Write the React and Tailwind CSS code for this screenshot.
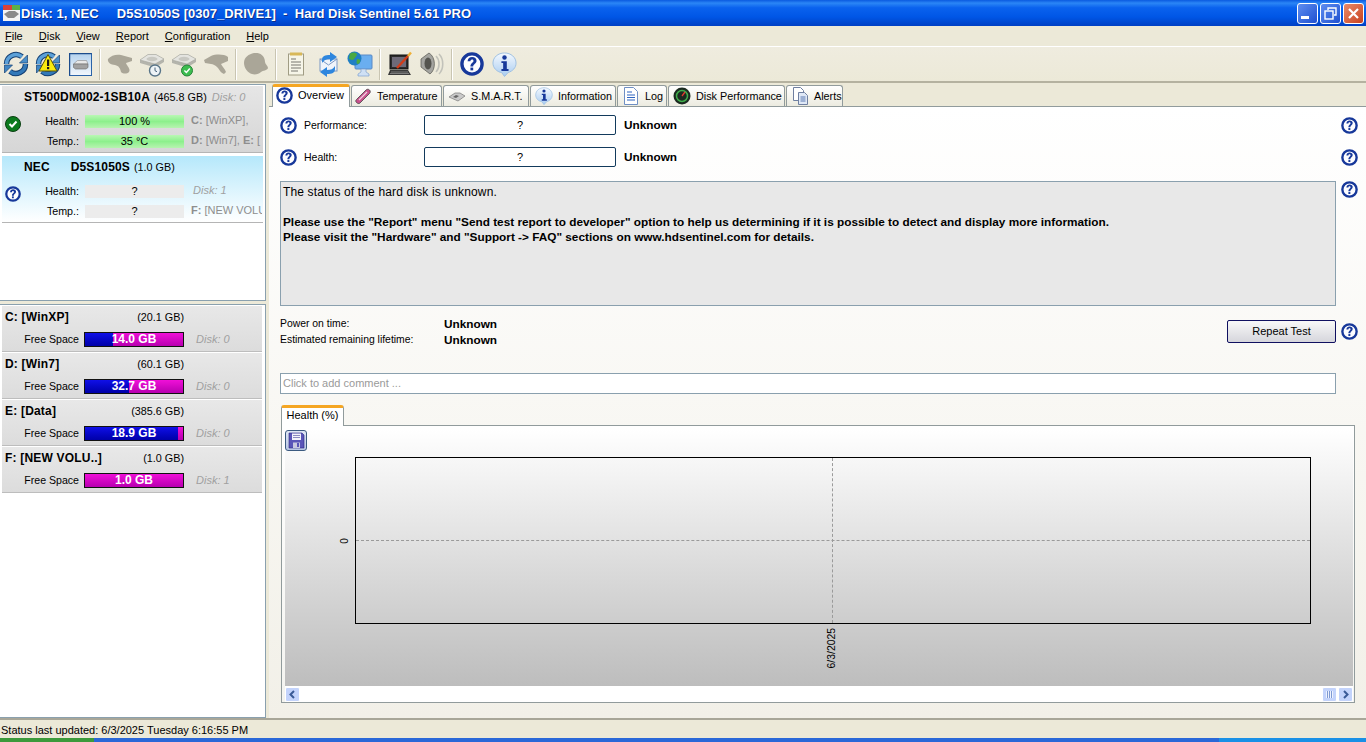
import React from "react";

const FONT = "font-['Liberation_Sans',Arial,sans-serif]";

function Help({ size = 16, className = "" }) {
  return (
    <svg width={size} height={size} viewBox="0 0 20 20" className={`shrink-0 ${className}`}>
      <circle cx="10" cy="10" r="8.4" fill="#fdfdff" stroke="#17389a" strokeWidth="2.8" />
      <path d="M6.3 7.700c.1-2.300 1.800-3.500 3.800-3.500 2.200 0 3.700 1.300 3.700 3 0 2.600-2.800 2.600-2.800 4.900H8.700c0-3.200 2.500-3.100 2.500-4.700 0-.8-.5-1.200-1.200-1.200-.8 0-1.200.6-1.300 1.500z" fill="#17389a" />
      <rect x="8.700" y="13" width="2.300" height="2.300" fill="#17389a" />
    </svg>
  );
}

function Info({ size = 25 }) {
  return (
    <svg width={size} height={size} viewBox="0 0 26 26" className="shrink-0">
      <defs>
        <linearGradient id="infoBg" x1="0" y1="0" x2="0" y2="1">
          <stop offset="0" stopColor="#f4f9ff" />
          <stop offset="1" stopColor="#a9ccf0" />
        </linearGradient>
      </defs>
      <path d="M13 1c6.800 0 12 4.600 12 10.500 0 4.800-3.400 8.400-8.200 9.800L13 25.500l-2.800-4C4.800 20.500 1 16.500 1 11.500 1 5.600 6.200 1 13 1z" fill="url(#infoBg)" stroke="#9dbfe2" />
      <circle cx="13" cy="5.800" r="2.300" fill="#17389a" />
      <path d="M9.800 9.600h5.600v8.200h1.800v1.900H9.800v-1.900h1.800v-6.300H9.800z" fill="#17389a" />
    </svg>
  );
}

function Ring() {
  return (
    <>
      <path d="M3.500 13a9.500 9.500 0 0 1 15.500-7.300" fill="none" stroke="#143f72" strokeWidth="5.500" />
      <path d="M22.500 13a9.500 9.500 0 0 1-15.500 7.300" fill="none" stroke="#143f72" strokeWidth="5.500" />
      <path d="M3.500 13a9.500 9.500 0 0 1 15.500-7.300" fill="none" stroke="#5ba0d8" strokeWidth="3.500" />
      <path d="M22.500 13a9.500 9.500 0 0 1-15.500 7.300" fill="none" stroke="#3379b8" strokeWidth="3.500" />
      <path d="M24.500 4v8h-8z" fill="#4a8fca" stroke="#143f72" strokeWidth=".7" />
      <path d="M1.500 22v-8h8z" fill="#3f86c4" stroke="#143f72" strokeWidth=".7" />
    </>
  );
}

function Refresh() {
  return (
    <svg width="26" height="26" viewBox="0 0 26 26">
      <Ring />
    </svg>
  );
}

function Alarm() {
  return (
    <svg width="26" height="26" viewBox="0 0 26 26">
      <Ring />
      <path d="M13 3.500l9 16.500H4z" fill="#f8ea10" stroke="#5c5606" strokeWidth="1" strokeLinejoin="round" />
      <rect x="12" y="8.500" width="2.200" height="6.500" fill="#1a1a1a" />
      <rect x="12" y="16" width="2.200" height="2.200" fill="#1a1a1a" />
    </svg>
  );
}

function DiskBox() {
  return (
    <svg width="23" height="23" viewBox="0 0 23 23">
      <defs>
        <linearGradient id="diskBg" x1="0" y1="0" x2="0" y2="1">
          <stop offset="0" stopColor="#b4d2ee" />
          <stop offset="1" stopColor="#f2f7fc" />
        </linearGradient>
      </defs>
      <rect x=".5" y=".5" width="22" height="22" fill="url(#diskBg)" stroke="#2a63a8" />
      <path d="M.5 22.500v-22h22" fill="none" stroke="#1c4c8c" strokeWidth="1.500" />
      <path d="M4.500 11l4-3.500h9l1.500 3.500z" fill="#e8e8e8" stroke="#8a8a8a" strokeWidth=".6" />
      <path d="M4.500 11H19v3.500l-2 1.500H6.500l-2-1.500z" fill="#a2a2a2" stroke="#6a6a6a" strokeWidth=".6" />
    </svg>
  );
}

// greyed toolbar buttons, the disabled ones are flat silhouettes
function Blob({ d }) {
  return (
    <svg width="26" height="22" viewBox="0 0 26 22">
      <path d={d} fill="#aaa698" />
    </svg>
  );
}

function GreyDisk({ badge }) {
  return (
    <svg width="26" height="26" viewBox="0 0 26 26">
      <path d="M1 9l8-5.500h8L25 8v3l-9 5.500L1 12z" fill="#b4b4ac" />
      <path d="M1 9l8-5.500h8L25 8l-9 5z" fill="#e4e4e0" stroke="#a6a69e" strokeWidth=".6" />
      <ellipse cx="13" cy="8" rx="5.500" ry="2.200" fill="#c8c8c2" />
      {badge === "clock" ? (
        <g>
          <circle cx="16" cy="19.500" r="5.500" fill="#eef3f6" stroke="#587488" strokeWidth="1.400" />
          <path d="M16 16.500v3.200l2 1" fill="none" stroke="#44607a" strokeWidth="1" />
        </g>
      ) : (
        <g>
          <circle cx="16" cy="19.500" r="5.500" fill="#3dbd50" stroke="#27833a" />
          <path d="M13.400 19.500l2 2 3.400-4" fill="none" stroke="#fff" strokeWidth="1.500" />
        </g>
      )}
    </svg>
  );
}

function Report() {
  return (
    <svg width="16" height="24" viewBox="0 0 16 24">
      <rect x=".5" y="2" width="15" height="21" fill="#f6f5e8" stroke="#a09c84" />
      <rect x="2" y=".5" width="12" height="3" fill="#d8b858" />
      <path d="M3 7h5M3 10h10M3 13h10M3 16h10M3 19h7" stroke="#77776f" strokeWidth="1.200" />
    </svg>
  );
}

function Mail() {
  return (
    <svg width="23" height="25" viewBox="0 0 23 25">
      <rect x="3" y="7" width="17" height="12" fill="#f0f4fb" stroke="#7b98c4" />
      <path d="M3 7l8.500 6L20 7" fill="none" stroke="#7b98c4" />
      <path d="M5 8C5 4 8 3 13 3V0l7 5-7 5V7C9 7 7 8 5 11z" fill="#2e86de" />
      <path d="M18 17c0 4-3 5-8 5v3l-7-5 7-5v3c4 0 6-1 8-4z" fill="#2e86de" />
    </svg>
  );
}

function Web() {
  return (
    <svg width="26" height="26" viewBox="0 0 26 26">
      <rect x="8" y="4" width="17" height="14" rx="1" fill="#6aaef0" stroke="#5a8ac6" />
      <path d="M14 18h5v3l3 2v2H11v-2l3-2z" fill="#cfe0f4" stroke="#7fa2cf" strokeWidth=".7" />
      <circle cx="7.500" cy="7.500" r="7" fill="#1f7fc4" />
      <path d="M3 2.500c2-1.500 5-1.500 6.500 0S8 6.500 7 8 3.500 9 2 7.500zM10 8c2-.5 4 .5 3 3s-3.500 2.500-3.500 0z" fill="#49a942" />
    </svg>
  );
}

function Laptop() {
  return (
    <svg width="24" height="26" viewBox="0 0 24 26">
      <rect x="2" y="4" width="18" height="14" fill="#2c2c2c" stroke="#111" />
      <rect x="4" y="6" width="14" height="10" fill="#6e6a78" />
      <path d="M2 19h18l3 5H0z" fill="#3a3a3a" />
      <path d="M3 21h17M2 22.500h19" stroke="#9a9a9a" strokeWidth=".7" />
      <path d="M9 17L20 5" stroke="#d23c18" strokeWidth="2.400" />
      <path d="M20 5l3-3.500" stroke="#efb038" strokeWidth="2.400" />
    </svg>
  );
}

function Speaker() {
  return (
    <svg width="24" height="26" viewBox="0 0 24 26">
      <path d="M1 8l8-6c7 4 7 17 1 21l-9-7z" fill="#a4a4a0" stroke="#55554f" strokeWidth=".7" />
      <ellipse cx="8" cy="12.500" rx="3.500" ry="6" fill="#54544f" />
      <path d="M16 5c4 4 4 12 0 16M19 3c5 5 5 15 0 20" fill="none" stroke="#c2c2ba" strokeWidth="1.600" />
    </svg>
  );
}

function ToolBtn({ children }) {
  return <div className="flex h-full w-[32px] shrink-0 items-center justify-center">{children}</div>;
}

function Sep() {
  return (
    <div className="flex h-full w-[8px] shrink-0 items-center justify-center">
      <div className="h-[31px] w-[2px] border-l border-r border-l-[#c9c5b2] border-r-white" />
    </div>
  );
}

function TabIcon({ name }) {
  if (name === "help") return <Help size={17} />;
  if (name === "info") return <Info size={18} />;
  if (name === "temp")
    return (
      <svg width="17" height="17" viewBox="0 0 17 17">
        <path d="M1.500 14.500c-1-1-1-2 0-3L11 2c1-1 2.500-1 3.500 0s1 2.500 0 3.500L5 15c-1 1-2.500.5-3.500-.5z" fill="#c8518c" stroke="#444" strokeWidth=".8" />
        <path d="M4 12l8-8" stroke="#f0d0e0" strokeWidth="1.200" />
      </svg>
    );
  if (name === "smart")
    return (
      <svg width="18" height="11" viewBox="0 0 18 11">
        <path d="M1 6l6-4h5l5 3-7 5z" fill="#c9c9c9" stroke="#777" strokeWidth=".7" />
        <path d="M5 6l3-2 3 1-3 2z" fill="#666" />
      </svg>
    );
  if (name === "log")
    return (
      <svg width="16" height="18" viewBox="0 0 16 18">
        <path d="M1.500.5h9l4 4v13h-13z" fill="#fff" stroke="#6f8fc4" />
        <path d="M4 5h5M4 8h8M4 10.500h8M4 13h8" stroke="#2f64c0" strokeWidth="1.100" />
      </svg>
    );
  if (name === "perf")
    return (
      <svg width="18" height="18" viewBox="0 0 18 18">
        <circle cx="9" cy="9" r="8.500" fill="#1b2a20" />
        <circle cx="9" cy="9" r="5.500" fill="none" stroke="#3fae4a" strokeWidth="1.500" />
        <path d="M9 9l3-4" stroke="#e23b2e" strokeWidth="1.300" />
      </svg>
    );
  return (
    <svg width="17" height="18" viewBox="0 0 17 18">
      <path d="M1.500.5h7l3 3v10h-10z" fill="#fff" stroke="#6f7fa0" />
      <path d="M6.500 5.500h6l3 3v9h-9z" fill="#dfe8f6" stroke="#6f7fa0" />
      <path d="M8.500 10h5M8.500 12h5M8.500 14h5" stroke="#5a78b0" />
    </svg>
  );
}

function Tab({ icon, label, active, width }) {
  if (active) {
    return (
      <div className={`relative z-10 -mb-px flex h-[23px] shrink-0 items-center gap-[5px] rounded-t-[3px] border-x border-[#919b9c] border-t-[3px] border-t-[#f5a623] bg-white pb-[4px] pl-[2px] ${width}`}>
        <span className="flex w-[18px] justify-center"><TabIcon name={icon} /></span>
        <span className="whitespace-nowrap">{label}</span>
      </div>
    );
  }
  return (
    <div className={`mt-[2px] flex h-[21px] shrink-0 items-center gap-[5px] rounded-t-[3px] border border-b-0 border-[#919b9c] bg-gradient-to-b from-white to-[#ecebe0] ${width}`}>
      <span className="flex w-[18px] justify-center"><TabIcon name={icon} /></span>
      <span className="whitespace-nowrap text-[10.8px]">{label}</span>
    </div>
  );
}

function Meter({ label, text, gray }) {
  return (
    <div className="flex h-[20px] items-center">
      <span className="w-[77px] text-right text-[10.7px]">{label}</span>
      <div className={`ml-[6px] flex h-[13px] w-[99px] items-center justify-center ${gray ? "bg-[#ececec]" : "bg-gradient-to-b from-[#b9f7b4] via-[#8cf08c] to-[#b6f3b0]"}`}>
        {text}
      </div>
    </div>
  );
}

function DiskCard({ selected, name, size, disk, children }) {
  return (
    <div className={`mx-[2px] flex h-[67px] flex-col overflow-hidden border-b border-b-[#b5b5b5] pt-[2px] ${selected ? "bg-gradient-to-b from-[#b5e8fb] to-white" : "bg-gradient-to-b from-[#e6e6e6] to-[#d6d6d6]"}`}>
      <div className="flex h-[18px] items-center whitespace-pre pl-[22px]">
        <b className="text-[12px] tracking-[.15px]">{name}</b>
        <span className="ml-[4px] text-[10.8px]">{size}</span>
        {disk && <i className="ml-[5px] text-[#a0a0a0]">{disk}</i>}
      </div>
      <div className="relative mt-[5px]">{children}</div>
    </div>
  );
}

function Volume({ name, size, free, disk, fill }) {
  return (
    <div className="mb-[2px] ml-[2px] mr-[3px] flex h-[45px] flex-col bg-gradient-to-b from-[#e8e8e8] to-[#dcdcdc] pt-[2px] shadow-[0_1px_0_#bdbdbd]">
      <div className="flex h-[18px] items-center whitespace-nowrap pl-[3px]">
        <b className="text-[12px] tracking-[.2px]">{name}</b>
        <span className="ml-auto mr-[78px] text-[10.8px]">{size}</span>
      </div>
      <div className="mt-[5px] flex h-[16px] items-center">
        <span className="w-[77px] text-right text-[10.6px]">Free Space</span>
        <div className="relative ml-[5px] h-[15px] w-[100px] border border-[#111] bg-gradient-to-b from-[#f010d8] to-[#b800b0]">
          <div className={`h-full bg-gradient-to-b from-[#1010e8] to-[#0000a8] ${fill}`} />
          <div className="absolute inset-0 flex items-center justify-center text-[12px] font-bold text-white">{free}</div>
        </div>
        <i className="ml-[12px] text-[#a0a0a0]">{disk}</i>
      </div>
    </div>
  );
}

function StatusRow({ label, className = "" }) {
  return (
    <div className={`flex h-[20px] items-center ${className}`}>
      <Help size={17} />
      <span className="ml-[7px] w-[120px] text-[10.5px]">{label}</span>
      <div className="flex h-[20px] w-[192px] items-center justify-center rounded-[2px] border border-[#123a5c] bg-white">?</div>
      <b className="ml-[8px] pt-px text-[11.8px]">Unknown</b>
      <Help size={17} className="ml-auto" />
    </div>
  );
}

function ScrollBtn({ children }) {
  return <div className="flex h-[15px] w-[15px] items-center justify-center rounded-[2px] border border-white bg-[#c3d3fb]">{children}</div>;
}

export default function App() {
  return (
    <div className={`${FONT} flex h-[742px] w-[1366px] flex-col overflow-hidden bg-[#ece9d8] text-[11px] leading-none text-black`}>
      {/* title bar */}
      <div className="flex h-[26px] shrink-0 items-center bg-[linear-gradient(180deg,#0a5ae0_0%,#2b86f6_12%,#0a62ee_30%,#0056e6_65%,#0040c4_100%)] pl-[3px] pr-[2px]">
        <svg width="17" height="16" viewBox="0 0 17 16" className="shrink-0">
          <rect width="17" height="16" fill="#f4f4f4" />
          <rect width="17" height="5" fill="#d8423a" />
          <rect x="9" width="8" height="5" fill="#5ab04a" />
          <path d="M1 9l5-3h6l4 3-5 4H5z" fill="#8a8a8a" />
        </svg>
        <span className="ml-[1px] whitespace-pre text-[13px] font-bold tracking-[.03px] text-white [text-shadow:1px_1px_0_#0f2f8a]">Disk: 1, NEC     D5S1050S [0307_DRIVE1]  -  Hard Disk Sentinel 5.61 PRO</span>
        <div className="ml-auto flex items-center gap-[2px]">
          <div className="flex h-[21px] w-[21px] items-end justify-center rounded-[3px] border border-white bg-gradient-to-br from-[#5f8df0] to-[#1f4fd0] pb-[4px] pr-[5px]">
            <div className="h-[3px] w-[8px] bg-white" />
          </div>
          <div className="flex h-[21px] w-[21px] items-center justify-center rounded-[3px] border border-white bg-gradient-to-br from-[#5f8df0] to-[#1f4fd0]">
            <svg width="13" height="13" viewBox="0 0 13 13">
              <path d="M4 3V1h8v7h-2" fill="none" stroke="#fff" strokeWidth="1.400" />
              <rect x="1" y="4" width="8" height="8" fill="none" stroke="#fff" strokeWidth="1.400" />
            </svg>
          </div>
          <div className="flex h-[21px] w-[21px] items-center justify-center rounded-[3px] border border-white bg-gradient-to-br from-[#e88a68] to-[#c8401c]">
            <svg width="13" height="13" viewBox="0 0 13 13">
              <path d="M2 2l9 9M11 2l-9 9" stroke="#fff" strokeWidth="2.200" />
            </svg>
          </div>
        </div>
      </div>

      {/* menu */}
      <div className="flex h-[20px] shrink-0 items-center gap-[16px] pl-[5px]">
        <span><u>F</u>ile</span>
        <span><u>D</u>isk</span>
        <span><u>V</u>iew</span>
        <span><u>R</u>eport</span>
        <span><u>C</u>onfiguration</span>
        <span><u>H</u>elp</span>
      </div>

      {/* toolbar */}
      <div className="flex h-[37px] shrink-0 items-center border-t border-b-2 border-t-white border-b-[#b5b2a0] bg-gradient-to-b from-[#efecdf] to-[#ece9d8]">
        <ToolBtn><Refresh /></ToolBtn>
        <ToolBtn><Alarm /></ToolBtn>
        <ToolBtn><DiskBox /></ToolBtn>
        <Sep />
        <ToolBtn><Blob d="M1 6C4 2 10 1 14 2l11 3v3l-6 2c1 3 5 6 3 9-2 2-6 2-8 0-1-4-2-6-6-7-4 0-8-3-7-6z" /></ToolBtn>
        <ToolBtn><GreyDisk badge="clock" /></ToolBtn>
        <ToolBtn><GreyDisk badge="check" /></ToolBtn>
        <ToolBtn><Blob d="M25 4c-4-3-12-3-17-1L1 7l1 3 6 1c2 0 4 1 7 4 2 3 3 5 6 6l2-2c-1-3-4-6-5-8l7-3z" /></ToolBtn>
        <Sep />
        <ToolBtn><Blob d="M11 0c6-1 11 3 11 9 0 2 3 4 3 6-1 3-5 2-7 4-2 2-6 3-9 2C5 20 1 15 1 10 1 4 6 1 11 0z" /></ToolBtn>
        <Sep />
        <ToolBtn><Report /></ToolBtn>
        <ToolBtn><Mail /></ToolBtn>
        <ToolBtn><Web /></ToolBtn>
        <Sep />
        <ToolBtn><Laptop /></ToolBtn>
        <ToolBtn><Speaker /></ToolBtn>
        <Sep />
        <ToolBtn><Help size={24} /></ToolBtn>
        <ToolBtn><Info /></ToolBtn>
      </div>

      {/* main */}
      <div className="flex min-h-0 flex-1">
        {/* left column */}
        <div className="mt-px flex w-[266px] shrink-0 flex-col gap-[3px]">
          <div className="h-[217px] shrink-0 border border-l-0 border-[#8aa0ae] bg-white pt-[1px]">
            <DiskCard name="ST500DM002-1SB10A" size="(465.8 GB)" disk="Disk: 0">
              <Meter label="Health:" text="100 %" />
              <Meter label="Temp.:" text="35 °C" />
              <div className="absolute left-[3px] top-[5px]">
                <svg width="16" height="16" viewBox="0 0 16 16">
                  <circle cx="8" cy="8" r="7.500" fill="#0c7a1e" stroke="#0a3f12" />
                  <path d="M4.500 8l2.500 2.500 4.500-5" fill="none" stroke="#fff" strokeWidth="2" />
                </svg>
              </div>
              <div className="absolute left-[189px] top-[4px] whitespace-nowrap text-[#8e8e8e]"><b>C:</b> [WinXP],</div>
              <div className="absolute left-[189px] top-[24px] w-[70px] overflow-hidden whitespace-nowrap text-[#8e8e8e]"><b>D:</b> [Win7], <b>E:</b> [</div>
            </DiskCard>
            <div className="h-[3px]" />
            <DiskCard selected name={"NEC      D5S1050S"} size="(1.0 GB)">
              <Meter label="Health:" text="?" gray />
              <Meter label="Temp.:" text="?" gray />
              <div className="absolute left-[3px] top-[5px]"><Help size={16} /></div>
              <i className="absolute left-[191px] top-[4px] whitespace-nowrap text-[#a0a0a0]">Disk: 1</i>
              <div className="absolute left-[189px] top-[24px] w-[71px] overflow-hidden whitespace-nowrap text-[#8e8e8e]"><b>F:</b> [NEW VOLU</div>
            </DiskCard>
          </div>
          <div className="min-h-0 flex-1 border border-l-0 border-[#8aa0ae] bg-white pt-[1px]">
            <Volume name="C: [WinXP]" size="(20.1 GB)" free="14.0 GB" disk="Disk: 0" fill="w-[29%]" />
            <Volume name="D: [Win7]" size="(60.1 GB)" free="32.7 GB" disk="Disk: 0" fill="w-[45%]" />
            <Volume name="E: [Data]" size="(385.6 GB)" free="18.9 GB" disk="Disk: 0" fill="w-[95%]" />
            <Volume name="F: [NEW VOLU..]" size="(1.0 GB)" free="1.0 GB" disk="Disk: 1" fill="w-0" />
          </div>
        </div>

        {/* right column */}
        <div className="ml-[3px] flex min-w-0 flex-1 flex-col">
          <div className="flex h-[23px] shrink-0 items-end gap-[1px] pl-[3px]">
            <Tab icon="help" label="Overview" active width="w-[78px]" />
            <Tab icon="temp" label="Temperature" width="w-[91px] pl-[2px]" />
            <Tab icon="smart" label="S.M.A.R.T." width="w-[86px] pl-[4px]" />
            <Tab icon="info" label="Information" width="w-[86px] pl-[4px]" />
            <Tab icon="log" label="Log" width="w-[50px] pl-[4px]" />
            <Tab icon="perf" label="Disk Performance" width="w-[117px] pl-[4px]" />
            <Tab icon="alerts" label="Alerts" width="w-[57px] pl-[4px]" />
          </div>
          <div className="flex min-h-0 flex-1 flex-col border-t border-[#919b9c] bg-gradient-to-b from-white to-[#f2f0e8] pl-[11px] pr-[8px] pt-[8px]">
            <StatusRow label="Performance:" />
            <StatusRow label="Health:" className="mt-[12px]" />
            <div className="mt-[14px] flex items-start">
              <div className="h-[125px] w-[1056px] border border-[#8aa0ae] bg-[#e8e8e8] px-[2px] pt-[3px] text-[12px] leading-[15px]">
                <div className="tracking-[.15px]">The status of the hard disk is unknown.</div>
                <div className="mt-[15px] text-[11.8px] font-bold">Please use the "Report" menu "Send test report to developer" option to help us determining if it is possible to detect and display more information.</div>
                <div className="text-[11.8px] font-bold">Please visit the "Hardware" and "Support -&gt; FAQ" sections on www.hdsentinel.com for details.</div>
              </div>
              <Help size={17} className="ml-[5px]" />
            </div>
            <div className="mt-[11px] flex h-[32px] w-full items-start">
              <div className="flex w-[164px] flex-col gap-[4px] pt-[2px] text-[10.4px]">
                <span className="h-[12px]">Power on time:</span>
                <span className="h-[12px] whitespace-nowrap">Estimated remaining lifetime:</span>
              </div>
              <div className="flex flex-col gap-[4px] pt-[2px] text-[11.8px] font-bold">
                <span className="h-[12px]">Unknown</span>
                <span className="h-[12px]">Unknown</span>
              </div>
              <div className="ml-auto mt-[3px] flex items-center">
                <div className="flex h-[23px] w-[109px] items-center justify-center rounded-[2px] border border-[#101060] bg-gradient-to-b from-[#f8f8f8] to-[#d6d6dc]">Repeat Test</div>
                <Help size={17} className="ml-[5px]" />
              </div>
            </div>
            <div className="mt-[24px] flex h-[21px] w-[1056px] shrink-0 items-center border border-[#8aa0ae] bg-white pl-[2px] text-[#9a9a9a]">Click to add comment ...</div>

            <div className="mt-[11px] flex h-[20px] shrink-0 items-end">
              <div className="relative z-10 -mb-px ml-px flex h-[21px] w-[63px] items-center justify-center rounded-t-[3px] border-x border-[#919b9c] border-t-[3px] border-t-[#f5a623] bg-white pb-[3px]">Health (%)</div>
            </div>
            <div className="ml-px flex h-[278px] w-[1074px] shrink-0 flex-col border border-[#919b9c] bg-gradient-to-b from-white to-[#f4f4f0] pl-[3px] pr-px pt-[3px]">
              <div className="relative flex min-h-0 flex-1 flex-col bg-gradient-to-b from-white to-[#bdbdbd] pl-[70px] pr-[42px] pt-[28px]">
                <div className="absolute left-0 top-[1px] flex h-[21px] w-[22px] items-center justify-center rounded-[3px] border border-[#3b5a80] bg-gradient-to-b from-[#dfe6f5] to-[#b9c6e4]">
                  <svg width="17" height="17" viewBox="0 0 17 17">
                    <path d="M1 1h13l2 2v13H1z" fill="#5a55b8" stroke="#2c2a80" strokeWidth=".6" />
                    <rect x="4" y="1.500" width="9" height="6.500" fill="#f2f2fa" />
                    <path d="M5 3.500h7M5 5.500h7" stroke="#8a8ac0" />
                    <rect x="5" y="10.500" width="7" height="5.500" fill="#c8c8e0" />
                    <rect x="9" y="11" width="2" height="4" fill="#5a55b8" />
                  </svg>
                </div>
                <div className="relative h-[167px] w-full border border-black">
                  <div className="absolute left-0 right-0 top-1/2 -mt-px border-t border-dashed border-[#9a9a9a]" />
                  <div className="absolute bottom-0 left-1/2 top-0 -ml-px border-l border-dashed border-[#9a9a9a]" />
                  <span className="absolute -left-[14px] top-1/2 -translate-y-1/2 -rotate-90 text-[10px]">0</span>
                  <span className="absolute -bottom-[30px] left-1/2 -ml-px -translate-x-1/2 -rotate-90 whitespace-nowrap text-[10.4px]">6/3/2025</span>
                </div>
              </div>
              <div className="flex h-[16px] shrink-0 items-center justify-between bg-white">
                <ScrollBtn>
                  <svg width="9" height="9" viewBox="0 0 9 9"><path d="M6 1L2.500 4.500 6 8" fill="none" stroke="#3a5a96" strokeWidth="2" /></svg>
                </ScrollBtn>
                <div className="flex gap-[1px]">
                  <ScrollBtn>
                    <div className="h-[7px] w-[7px] bg-[repeating-linear-gradient(90deg,#eef3ff_0_1px,#7f9ad2_1px_2px)]" />
                  </ScrollBtn>
                  <ScrollBtn>
                    <svg width="9" height="9" viewBox="0 0 9 9"><path d="M3 1l3.500 3.500L3 8" fill="none" stroke="#3a5a96" strokeWidth="2" /></svg>
                  </ScrollBtn>
                </div>
              </div>
            </div>
          </div>
        </div>
      </div>

      {/* status bar */}
      <div className="flex h-[20px] shrink-0 items-center border-t-2 border-t-[#a8a698] bg-[#ece9d8] pl-[1px] pt-[2px]">Status last updated: 6/3/2025 Tuesday 6:16:55 PM</div>
      {/* bit of the desktop taskbar */}
      <div className="flex h-[4px] shrink-0">
        <div className="h-full w-[94px] bg-[#3c9a3c]" />
        <div className="h-full flex-1 bg-[#2a68d8]" />
        <div className="h-full w-[147px] bg-[#1990e6]" />
      </div>
    </div>
  );
}
